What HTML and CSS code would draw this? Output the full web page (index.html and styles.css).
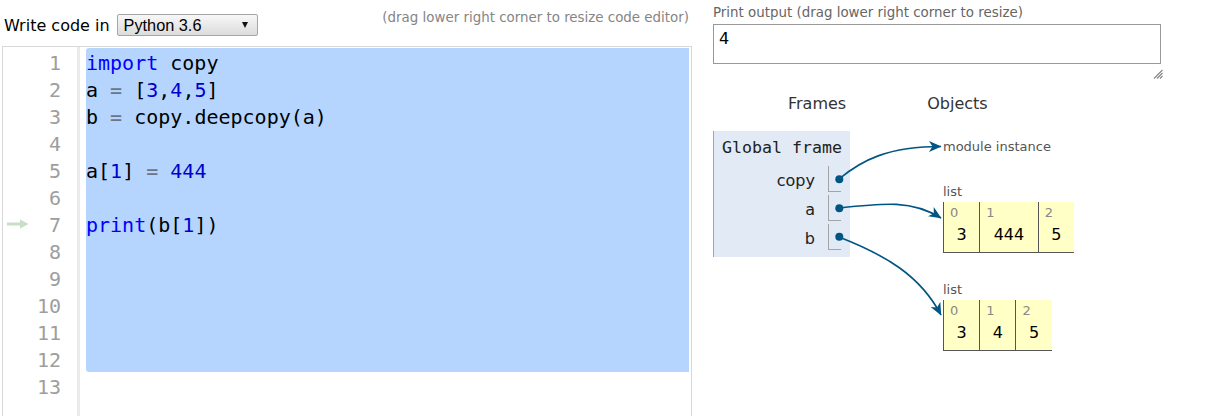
FILE: index.html
```html
<!DOCTYPE html>
<html>
<head>
<meta charset="utf-8">
<title>Python Tutor</title>
<link rel="stylesheet" href="styles.css">
</head>
<body>
<div class="page">
  <div class="left">
    <div class="toolbar">
      <div class="lang">
        <span>Write code in</span>
        <span class="select"><span>Python 3.6</span><span class="caret"></span></span>
      </div>
      <span class="hint">(drag lower right corner to resize code editor)</span>
    </div>
    <div class="editor">
      <div class="gutter">
        <div class="grow"><span class="ln">1</span></div>
        <div class="grow"><span class="ln">2</span></div>
        <div class="grow"><span class="ln">3</span></div>
        <div class="grow"><span class="ln">4</span></div>
        <div class="grow"><span class="ln">5</span></div>
        <div class="grow"><span class="ln">6</span></div>
        <div class="grow"><svg class="cur" width="22" height="10" viewBox="0 0 22 10"><rect x="0" y="3.5" width="14" height="3" fill="#c6dfc6"/><polygon points="13,0.5 21.5,5 13,9.5" fill="#c6dfc6"/></svg><span class="ln">7</span></div>
        <div class="grow"><span class="ln">8</span></div>
        <div class="grow"><span class="ln">9</span></div>
        <div class="grow"><span class="ln">10</span></div>
        <div class="grow"><span class="ln">11</span></div>
        <div class="grow"><span class="ln">12</span></div>
        <div class="grow"><span class="ln">13</span></div>
      </div>
      <div class="code">
        <div class="sel">
          <div class="line"><span class="kw">import</span> copy</div>
          <div class="line">a <span class="op">=</span> [<span class="num">3</span>,<span class="num">4</span>,<span class="num">5</span>]</div>
          <div class="line">b <span class="op">=</span> copy.deepcopy(a)</div>
          <div class="line"></div>
          <div class="line">a[<span class="num">1</span>] <span class="op">=</span> <span class="num">444</span></div>
          <div class="line"></div>
          <div class="line"><span class="kw">print</span>(b[<span class="num">1</span>])</div>
          <div class="line"></div>
          <div class="line"></div>
          <div class="line"></div>
          <div class="line"></div>
          <div class="line"></div>
        </div>
        <div class="line"></div>
      </div>
    </div>
  </div>

  <div class="right">
    <div class="out-label">Print output (drag lower right corner to resize)</div>
    <div class="output">4</div>
    <div class="grip-row">
      <svg width="10" height="10" viewBox="0 0 10 10"><path d="M9.5 1 L1 9.5 M9.5 4 L4 9.5 M9.5 7 L7 9.5" stroke="#8a8a8a" stroke-width="1.2"/></svg>
    </div>
    <div class="heads"><span class="fr">Frames</span><span class="ob">Objects</span></div>
    <div class="viz-body">
      <div class="frame">
        <div class="frame-title">Global frame</div>
        <div class="vars">
          <span class="vname">copy</span><span class="vval"></span>
          <span class="vname">a</span><span class="vval"></span>
          <span class="vname">b</span><span class="vval"></span>
        </div>
      </div>
      <div class="heap">
        <div class="module">module instance</div>
        <div class="obj obj1">
          <div class="obj-label">list</div>
          <div class="list">
            <div class="cell"><div class="idx">0</div><div class="val">3</div></div>
            <div class="cell wide"><div class="idx">1</div><div class="val">444</div></div>
            <div class="cell"><div class="idx">2</div><div class="val">5</div></div>
          </div>
        </div>
        <div class="obj obj2">
          <div class="obj-label">list</div>
          <div class="list">
            <div class="cell"><div class="idx">0</div><div class="val">3</div></div>
            <div class="cell"><div class="idx">1</div><div class="val">4</div></div>
            <div class="cell"><div class="idx">2</div><div class="val">5</div></div>
          </div>
        </div>
      </div>
    </div>
  </div>

  <svg class="wires" width="1205" height="416" viewBox="0 0 1205 416">
    <defs>
      <marker id="ah" markerWidth="13" markerHeight="11" refX="12" refY="5.5" orient="auto" markerUnits="userSpaceOnUse">
        <path d="M0,0 L12.5,5.5 L0,11 L3.5,5.5 Z" fill="#005583"/>
      </marker>
    </defs>
    <path d="M839,179 C862,160 888,146.5 941,146.5" fill="none" stroke="#005583" stroke-width="1.6" marker-end="url(#ah)"/>
    <path d="M839,208 C885,203 912,200 941,218" fill="none" stroke="#005583" stroke-width="1.6" marker-end="url(#ah)"/>
    <path d="M839,237 C885,255 920,275 941,315" fill="none" stroke="#005583" stroke-width="1.6" marker-end="url(#ah)"/>
    <circle cx="839.3" cy="179.3" r="4" fill="#005583"/>
    <circle cx="839.3" cy="208.3" r="4" fill="#005583"/>
    <circle cx="839.3" cy="236.8" r="4" fill="#005583"/>
  </svg>
</div>
</body>
</html>
```

FILE: styles.css
```css
html, body {
  margin: 0;
  padding: 0;
  overflow: hidden;
  background: #fff;
}

.page {
  position: relative;
  width: 1205px;
  height: 416px;
  display: flex;
  font-family: "DejaVu Sans", Verdana, sans-serif;
  color: #000;
}

/* ---------- left pane ---------- */
.left {
  width: 690px;
  margin-left: 2px;
  flex: none;
}

.toolbar {
  height: 46px;
  display: flex;
  justify-content: space-between;
  align-items: flex-start;
  padding-right: 3px;
  box-sizing: border-box;
}

.lang {
  display: flex;
  align-items: center;
  margin-top: 14px;
  margin-left: 2px;
  height: 22px;
  font-size: 16px;
  line-height: 19px;
}

.select {
  margin-left: 7px;
  width: 141px;
  height: 22px;
  box-sizing: border-box;
  border: 1px solid #a6a6a6;
  border-radius: 2px;
  background: linear-gradient(#f7f7f7, #dcdcdc);
  font-family: "Liberation Sans", Arial, sans-serif;
  font-size: 16.3px;
  line-height: 20px;
  padding: 0 9px 0 6px;
  display: flex;
  justify-content: space-between;
  align-items: center;
}

.caret {
  width: 0;
  height: 0;
  border-left: 3.5px solid transparent;
  border-right: 3.5px solid transparent;
  border-top: 6px solid #111;
}

.hint {
  margin-top: 9px;
  font-size: 13.4px;
  line-height: 17px;
  color: #858585;
}

.editor {
  height: 371px;
  box-sizing: border-box;
  border: 1px solid #d8d8d8;
  display: flex;
}

.gutter {
  width: 74px;
  flex: none;
  border-right: 3px solid #ebebeb;
  padding-top: 1px;
  font-family: "DejaVu Sans Mono", monospace;
  font-size: 20px;
  color: #9e9e9e;
}

.grow {
  height: 27px;
  display: flex;
  align-items: flex-start;
  padding: 0 16px 0 4px;
}

.ln {
  margin-left: auto;
  line-height: 30px;
}

.cur {
  display: block;
  align-self: center;
  margin-top: 1px;
}

.code {
  flex: 1;
  padding: 1px 2px 0 6px;
  font-family: "DejaVu Sans Mono", monospace;
  font-size: 20px;
}

.sel {
  background: #b5d5ff;
  border-radius: 3px 0 0 3px;
}

.line {
  height: 27px;
  line-height: 30px;
  white-space: pre;
}

.kw { color: #0000ff; }
.num { color: #0000cd; }
.op { color: #687687; }

/* ---------- right pane ---------- */
.right {
  width: 448px;
  margin-left: 21px;
  flex: none;
  padding-top: 4px;
}

.out-label {
  font-size: 13.4px;
  line-height: 17px;
  color: #666;
}

.output {
  margin-top: 3px;
  height: 40px;
  box-sizing: border-box;
  border: 1px solid #999;
  padding: 4px 5px;
  font-size: 16px;
  line-height: 19px;
}

.grip-row {
  height: 16px;
  display: flex;
  justify-content: flex-end;
  align-items: flex-start;
  margin-right: -2px;
}

.grip-row svg {
  margin-top: 5px;
}

.heads {
  margin-top: 14px;
  height: 20px;
  display: flex;
  font-size: 16px;
  line-height: 19px;
  color: #333;
}

.heads .fr { margin-left: 75px; }
.heads .ob { margin-left: 81px; }

.viz-body {
  display: flex;
  align-items: flex-start;
  margin-top: 17px;
}

.frame {
  width: 137px;
  box-sizing: border-box;
  background: #e1eaf5;
  border-left: 1px solid #a4a4a4;
  padding: 6px 9px 7px 8px;
}

.frame-title {
  font-family: "DejaVu Sans Mono", monospace;
  font-size: 16.6px;
  line-height: 21px;
  height: 20px;
  color: #222;
  margin-bottom: 9px;
  white-space: nowrap;
}

.vars {
  display: grid;
  grid-template-columns: 1fr 13px;
  column-gap: 13px;
  row-gap: 3px;
}

.vname {
  text-align: right;
  font-size: 16px;
  height: 26px;
  line-height: 29px;
  color: #222;
}

.vval {
  height: 26px;
  box-sizing: border-box;
  border-left: 1px solid #a4a4a4;
  border-bottom: 1px solid #a4a4a4;
}

.heap {
  margin-left: 93px;
  padding-top: 7.5px;
}

.module,
.obj-label {
  font-size: 13px;
  line-height: 16px;
  color: #555;
}

.obj1 { margin-top: 29px; }
.obj2 { margin-top: 28.5px; }

.obj-label {
  margin-bottom: 2.5px;
}

.list {
  display: flex;
}

.cell {
  background: #ffffc6;
  border-left: 1px solid #555;
  border-bottom: 1px solid #555;
  padding: 3px 0 8px;
}

.idx {
  font-size: 13px;
  line-height: 15px;
  color: #888;
  padding-left: 6px;
}

.val {
  font-size: 16px;
  line-height: 19px;
  padding: 5px 12.5px 0;
  text-align: center;
}

.cell.wide .val {
  padding: 5px 13.5px 0;
}

.wires {
  position: absolute;
  left: 0;
  top: 0;
  pointer-events: none;
}
```
